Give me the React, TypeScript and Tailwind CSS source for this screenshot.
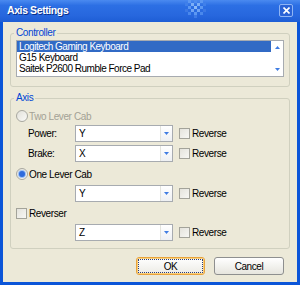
const FONT = "font-['Liberation_Sans',Arial,sans-serif] text-[10px] tracking-[-0.4px]";

function Combo({ value }: { value: string }) {
  return (
    <div className="flex h-[17px] w-[98px] items-stretch border border-[#A7ABB0] bg-white">
      <span className="flex-1 pl-[3px] leading-[15px] text-black">{value}</span>
      <span className="flex w-[12px] items-center justify-center border-l border-[#E2E3DD] bg-gradient-to-b from-white to-[#EEF0F3]">
        <svg width="5" height="3" viewBox="0 0 5 3" aria-hidden>
          <path d="M0 0h5L2.5 3z" fill="#3F7CE2" />
        </svg>
      </span>
    </div>
  );
}

function Check({ label }: { label: string }) {
  return (
    <div className="flex items-center gap-[2px]">
      <span className="h-[11px] w-[11px] border border-[#A3A39A] bg-gradient-to-br from-[#E4E3DC] to-[#F7F7F4]" />
      <span className="text-black">{label}</span>
    </div>
  );
}

function Radio({ label, checked, disabled }: { label: string; checked?: boolean; disabled?: boolean }) {
  return (
    <div className="flex h-[12px] items-center gap-[1px]">
      <span className="flex h-[12px] w-[12px] items-center justify-center rounded-full border border-[#A8A8A0] bg-gradient-to-br from-[#E2E1DA] to-[#FAFAF8]">
        {checked && <span className="h-[6px] w-[6px] rounded-full bg-[#2F6BDC] shadow-[0_0_0_1px_#9CC0F5]" />}
      </span>
      <span className={disabled ? "text-[#A3A195]" : "text-black"}>{label}</span>
    </div>
  );
}

function AxisRow({ label, value }: { label?: string; value: string }) {
  return (
    <div className="flex h-[17px] items-center pl-[12px]">
      <span className="w-[47px] text-black">{label}</span>
      <Combo value={value} />
      <div className="ml-[6px]">
        <Check label="Reverse" />
      </div>
    </div>
  );
}

const ITEMS = ["Logitech Gaming Keyboard", "G15 Keyboard", "Saitek P2600 Rumble Force Pad"];

export default function App() {
  return (
    <div className={`flex h-[285px] w-[300px] flex-col bg-[#0B55D8] ${FONT}`}>
      {/* title bar */}
      <div className="flex h-[22px] items-center bg-[linear-gradient(to_bottom,#4A8AF0_0%,#2C6FE4_25%,#2767DE_70%,#1E5DD5_100%)] pl-[7px] pr-[7px]">
        <span className="w-[178px] text-[10.5px] font-bold tracking-[-0.4px] text-white [text-shadow:1px_1px_0_#0A2F8A]">
          Axis Settings
        </span>
        <svg width="21" height="18" viewBox="0 0 21 18" className="self-start" aria-hidden>
          <rect x="3" y="0" width="3" height="3" fill="#5C98F2" />
          <rect x="9" y="0" width="3" height="3" fill="#4E8CEE" />
          <rect x="15" y="0" width="3" height="3" fill="#5C98F2" />
          <rect x="0" y="3" width="3" height="3" fill="#4080EA" />
          <rect x="6" y="3" width="3" height="3" fill="#7BAEF6" />
          <rect x="12" y="3" width="3" height="3" fill="#7BAEF6" />
          <rect x="18" y="3" width="3" height="3" fill="#4080EA" />
          <rect x="3" y="6" width="3" height="3" fill="#5C98F2" />
          <rect x="9" y="6" width="3" height="3" fill="#8BBAF8" />
          <rect x="15" y="6" width="3" height="3" fill="#5C98F2" />
          <rect x="0" y="9" width="3" height="3" fill="#3B78E4" />
          <rect x="6" y="9" width="3" height="3" fill="#6FA4F4" />
          <rect x="12" y="9" width="3" height="3" fill="#6FA4F4" />
          <rect x="18" y="9" width="3" height="3" fill="#3B78E4" />
          <rect x="3" y="12" width="3" height="3" fill="#4A88EC" />
          <rect x="9" y="12" width="3" height="3" fill="#5C98F2" />
          <rect x="15" y="12" width="3" height="3" fill="#4A88EC" />
          <rect x="9" y="15" width="3" height="3" fill="#3D7AE6" />
        </svg>
        <div className="ml-auto mt-[4px] flex h-[13px] w-[14px] items-center justify-center self-start rounded-[2px] border border-[#8FB5F5] bg-[#2A63D6]">
          <svg width="7" height="7" viewBox="0 0 7 7" aria-hidden>
            <path d="M0.5 0.5l6 6M6.5 0.5l-6 6" stroke="white" strokeWidth="1.6" />
          </svg>
        </div>
      </div>

      {/* body */}
      <div className="mx-[3px] mb-[3px] flex flex-1 flex-col bg-[#ECE9D8]">
        <fieldset className="mx-[7px] mt-[5px] rounded-[3px] border border-[#D0D0BF] px-[5px] pb-[9px]">
          <legend className="-ml-[2px] px-[2px] leading-[12px] text-[#0046D5]">Controller</legend>
          <div className="mt-[1px] flex h-[37px] border border-[#A7ABB0] bg-white">
            <div className="flex-1">
              {ITEMS.map((item, i) => (
                <div
                  key={item}
                  className={`h-[11px] pl-[2px] leading-[11px] tracking-[-0.5px] ${i === 0 ? "bg-[#316AC5] text-white" : "text-black"}`}
                >
                  {item}
                </div>
              ))}
            </div>
            <div className="flex w-[12px] flex-col items-center justify-between py-[5px]">
              <svg width="5" height="3" viewBox="0 0 5 3" aria-hidden>
                <path d="M2.5 0L5 3H0z" fill="#3F7CE2" />
              </svg>
              <svg width="5" height="3" viewBox="0 0 5 3" aria-hidden>
                <path d="M0 0h5L2.5 3z" fill="#3F7CE2" />
              </svg>
            </div>
          </div>
        </fieldset>

        <fieldset className="mx-[7px] mt-[5px] rounded-[3px] border border-[#D0D0BF] px-[5px] pb-[7px]">
          <legend className="-ml-[2px] px-[2px] leading-[12px] text-[#0046D5]">Axis</legend>
          <div className="mt-[6px]">
            <Radio label="Two Lever Cab" disabled />
          </div>
          <div className="mt-[3px]">
            <AxisRow label="Power:" value="Y" />
          </div>
          <div className="mt-[3px]">
            <AxisRow label="Brake:" value="X" />
          </div>
          <div className="mt-[6px]">
            <Radio label="One Lever Cab" checked />
          </div>
          <div className="mt-[5px]">
            <AxisRow value="Y" />
          </div>
          <div className="mt-[5px] flex h-[12px] items-center">
            <Check label="Reverser" />
          </div>
          <div className="mt-[5px]">
            <AxisRow value="Z" />
          </div>
        </fieldset>

        <div className="mt-[8px] flex justify-end gap-[9px] pr-[13px]">
          <button
            type="button"
            className="flex h-[18px] w-[69px] items-center justify-center rounded-[3px] border border-[#E9A33B] bg-gradient-to-b from-white to-[#ECEBE5] p-[1px] shadow-[inset_0_0_0_1px_#FBD07A]"
          >
            <span className="flex h-full w-full items-center justify-center border border-dotted border-[#2C3E7A] text-black">
              OK
            </span>
          </button>
          <button
            type="button"
            className="flex h-[18px] w-[70px] items-center justify-center rounded-[3px] border border-[#8E8F8F] bg-gradient-to-b from-white to-[#E6E5DE] text-black"
          >
            Cancel
          </button>
        </div>
      </div>
    </div>
  );
}
